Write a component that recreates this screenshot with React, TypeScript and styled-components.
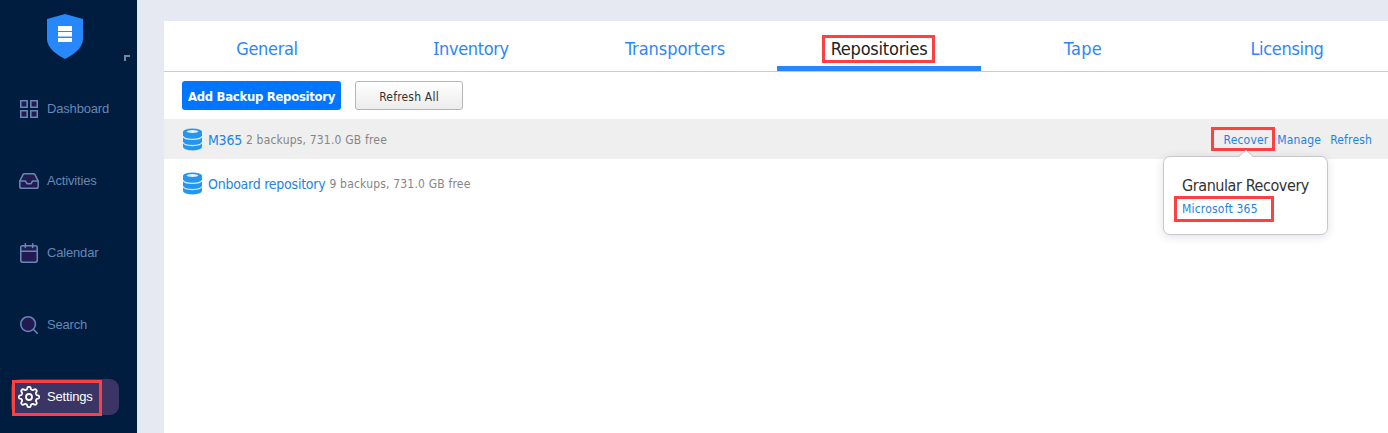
import React from 'react';
import styled, { createGlobalStyle, css } from 'styled-components';

const GlobalStyle = createGlobalStyle`
  *, *::before, *::after { box-sizing: border-box; }
  body { margin: 0; overflow: hidden; }
`;

const uiFont = css`
  font-family: 'DejaVu Sans Condensed', 'DejaVu Sans', 'Noto Sans', sans-serif;
  font-stretch: condensed;
`;

const Page = styled.div`
  display: flex;
  height: 433px;
  background: #e6e9f2;
  overflow: hidden;
  ${uiFont}
`;

const Sidebar = styled.nav`
  width: 137px;
  flex: none;
  background: #001c3f;
  display: flex;
  flex-direction: column;
`;

const Brand = styled.div`
  flex: none;
  height: 91px;
  padding: 14px 0 0 47px;
  position: relative;
`;

const CollapseMark = styled.span`
  position: absolute;
  left: 124px;
  top: 55px;
  width: 6px;
  height: 6px;
  border: solid #7388a3;
  border-width: 2px 0 0 2px;
`;

const NavItem = styled.a<{ $active?: boolean }>`
  position: relative;
  display: flex;
  align-items: center;
  height: 36px;
  width: 108px;
  margin: 0 0 36px 11px;
  padding-left: 6px;
  border-radius: 9px;
  flex: none;
  font: 13px 'Liberation Sans', Arial, sans-serif;
  letter-spacing: -0.17px;
  color: ${p => (p.$active ? '#fff' : '#6589b4')};
  background: ${p => (p.$active ? '#3b3465' : 'transparent')};
`;

const NavIcon = styled.svg<{ $active?: boolean }>`
  width: 24px;
  height: 24px;
  margin-right: 6px;
  overflow: visible;
  fill: ${p => (p.$active ? 'none' : '#241a52')};
  stroke: ${p => (p.$active ? '#fff' : '#6589b4')};
  stroke-width: ${p => (p.$active ? 1.8 : 1.7)};
  stroke-linecap: round;
  stroke-linejoin: round;
`;

const NavLabel = styled.span`
  margin-top: -1px;
`;

const Highlight = styled.span<{ $inset: string }>`
  position: absolute;
  inset: ${p => p.$inset};
  border: 3px solid #fc4141;
  pointer-events: none;
`;

const Panel = styled.main`
  flex: 1;
  margin: 21px 0 0 27px;
  background: #fff;
`;

const Tabs = styled.div`
  display: grid;
  grid-template-columns: repeat(6, 204px);
  height: 51px;
  padding-left: 1px;
  border-bottom: 1px solid #ccc;
`;

const Tab = styled.a<{ $active?: boolean; $spacing?: number }>`
  display: flex;
  justify-content: center;
  height: 50px;
  padding-top: 5px;
  line-height: 45px;
  font-size: 18px;
  letter-spacing: ${p => p.$spacing ?? 0}px;
  color: ${p => (p.$active ? '#222' : '#2b87f7')};
  border-bottom: 5px solid ${p => (p.$active ? '#2688fb' : 'transparent')};
`;

const TabLabel = styled.span`
  position: relative;
  height: 45px;
`;

const SerifCap = styled.span`
  font-family: 'Noto Sans', sans-serif;
`;

const Toolbar = styled.div`
  display: flex;
  gap: 14px;
  padding: 9px 18px;
  height: 47px;
`;

const Button = styled.button<{ $primary?: boolean }>`
  ${uiFont}
  height: 29px;
  width: ${p => (p.$primary ? 159 : 108)}px;
  padding: ${p => (p.$primary ? 1 : 2)}px 0 0;
  border-radius: 3px;
  white-space: nowrap;
  font-size: ${p => (p.$primary ? 13 : 12)}px;
  font-weight: ${p => (p.$primary ? 700 : 400)};
  letter-spacing: ${p => (p.$primary ? -0.3 : 0.2)}px;
  color: ${p => (p.$primary ? '#fff' : '#333')};
  border: ${p => (p.$primary ? '0' : '1px solid #b5b5b5')};
  background: ${p => (p.$primary ? '#0075ff' : 'linear-gradient(#fff, #ececec)')};
`;

const Row = styled.div<{ $hover?: boolean }>`
  display: flex;
  align-items: center;
  height: 40px;
  margin-bottom: 4px;
  padding: 0 17px 0 18px;
  background: ${p => (p.$hover ? '#efefef' : 'transparent')};
`;

const DiskIcon = styled.svg`
  width: 21px;
  height: 23px;
  margin-right: 5px;
`;

const RepoName = styled.a`
  padding-top: 1px;
  font-size: 14px;
  letter-spacing: -0.25px;
  color: #2283e2;
  white-space: nowrap;
`;

const RepoInfo = styled.span`
  padding-top: 1px;
  margin-left: 4px;
  font-size: 12px;
  letter-spacing: 0.19px;
  color: #858585;
  white-space: nowrap;
`;

const Actions = styled.div`
  display: flex;
  gap: 9px;
  margin-left: auto;
  padding-top: 1px;
  font-size: 12px;
  letter-spacing: 0.16px;
  color: #1e82e2;
`;

const Action = styled.a`
  position: relative;
`;

const Popover = styled.div`
  position: absolute;
  z-index: 2;
  left: 1163px;
  top: 156px;
  width: 165px;
  height: 79px;
  padding: 18px 0 0 18px;
  background: #fff;
  border: 1px solid #c8c8cc;
  border-radius: 7px;
  box-shadow: 0 2px 10px rgba(40, 40, 80, 0.14);
`;

const Arrow = styled.svg`
  position: absolute;
  left: 73px;
  top: -8px;
  width: 18px;
  height: 9px;
`;

const PopTitle = styled.div`
  font-size: 16px;
  line-height: 21px;
  letter-spacing: -0.42px;
  color: #333;
  white-space: nowrap;
`;

const PopLink = styled.a`
  position: relative;
  display: inline-block;
  margin-top: 4px;
  font-size: 12px;
  line-height: 18px;
  letter-spacing: 0.2px;
  color: #1e82e2;
  white-space: nowrap;
`;

const Disk = () => (
  <DiskIcon viewBox="0 0 21 23">
    <path d="M1 3.800v14.800C1 23.800 20 23.800 20 18.600V3.800z" fill="#2496f2" />
    <ellipse cx="10.500" cy="3.800" rx="9.500" ry="3.400" fill="#2496f2" />
    <ellipse cx="10.500" cy="3.500" rx="5.800" ry="1.400" fill="#e4f3ff" />
    <path d="M1 8.200c1.500 4.200 17.500 4.200 19 0M1 14.400c1.500 4.200 17.500 4.200 19 0" fill="none" stroke="#d8edff" strokeWidth="1.300" />
  </DiskIcon>
);

const small = '-1.1 -1.1 26.2 26.2';

// Outline of a gear with eight rounded teeth, the first pointing up.
const gearPoints = Array.from({ length: 160 }, (_, i) => {
  const a = (i / 160) * Math.PI * 2;
  const r = 8.9 + 1.3 * Math.tanh(1.8 * Math.cos(8 * a));
  return `${(12 + r * Math.sin(a)).toFixed(2)} ${(12 - r * Math.cos(a)).toFixed(2)}`;
});
const gearPath = `M${gearPoints.join('L')}z`;

export default function App() {
  return (
    <Page>
      <GlobalStyle />
      <Sidebar>
        <Brand>
          <svg width="36" height="46" viewBox="0 0 36 46">
            <path d="M18 0 36 5v20c0 9-10 16-18 20C10 41 0 34 0 25V5z" fill="#2688fb" />
            <path d="M11 12h14v5H11zM11 18h14v4H11zM11 24h14v4H11z" fill="#fff" />
            <path d="M11 22h14v1H11z" fill="#9bc9ff" />
          </svg>
          <CollapseMark />
        </Brand>
        <NavItem>
          <NavIcon viewBox={small}>
            <path d="M3 3h7v7H3zM14 3h7v7h-7zM14 14h7v7h-7zM3 14h7v7H3z" strokeLinejoin="miter" />
          </NavIcon>
          <NavLabel>Dashboard</NavLabel>
        </NavItem>
        <NavItem>
          <NavIcon viewBox={small}>
            <path d="M5.450 5.110 2 12v6a2 2 0 0 0 2 2h16a2 2 0 0 0 2-2v-6l-3.450-6.890A2 2 0 0 0 16.760 4H7.240a2 2 0 0 0-1.790 1.110z" />
            <path d="M22 12h-6l-2 3h-4l-2-3H2" fill="none" />
          </NavIcon>
          <NavLabel>Activities</NavLabel>
        </NavItem>
        <NavItem>
          <NavIcon viewBox={small}>
            <rect x="3" y="4" width="18" height="18" rx="2" />
            <path d="M16 2v4M8 2v4M3 10h18" />
          </NavIcon>
          <NavLabel>Calendar</NavLabel>
        </NavItem>
        <NavItem>
          <NavIcon viewBox={small}>
            <circle cx="11" cy="11" r="8" />
            <path d="m21 21-4.350-4.350" />
          </NavIcon>
          <NavLabel>Search</NavLabel>
        </NavItem>
        <NavItem $active>
          <NavIcon $active viewBox="0 0 24 24">
            <circle cx="12" cy="12" r="3" />
            <path d={gearPath} />
          </NavIcon>
          <NavLabel>Settings</NavLabel>
          <Highlight $inset="1px 17px -1px 1px" />
        </NavItem>
      </Sidebar>
      <Panel>
        <Tabs>
          <Tab $spacing={-0.35}><TabLabel>General</TabLabel></Tab>
          <Tab $spacing={-0.35}><TabLabel><SerifCap>I</SerifCap>nventory</TabLabel></Tab>
          <Tab $spacing={-0.05}><TabLabel>Transporters</TabLabel></Tab>
          <Tab $active $spacing={-0.22}>
            <TabLabel>
              Repositories
              <Highlight $inset="9px -8px 8px -9px" />
            </TabLabel>
          </Tab>
          <Tab $spacing={0.3}><TabLabel>Tape</TabLabel></Tab>
          <Tab $spacing={-0.33}><TabLabel>Licensing</TabLabel></Tab>
        </Tabs>
        <Toolbar>
          <Button $primary>Add Backup Repository</Button>
          <Button>Refresh All</Button>
        </Toolbar>
        <Row $hover>
          <Disk />
          <RepoName>M365</RepoName>
          <RepoInfo>2 backups, 731.0 GB free</RepoInfo>
          <Actions>
            <Action>
              Recover
              <Highlight $inset="-6px -7px -4px -13px" />
            </Action>
            <Action>Manage</Action>
            <Action>Refresh</Action>
          </Actions>
        </Row>
        <Row>
          <Disk />
          <RepoName>Onboard repository</RepoName>
          <RepoInfo>9 backups, 731.0 GB free</RepoInfo>
        </Row>
      </Panel>
      <Popover>
        <Arrow viewBox="0 0 18 9">
          <path d="M1 9 9 1.500 17 9z" fill="#fff" />
          <path d="M1 8 9 1.200 17 8" fill="none" stroke="#c8c8cc" />
        </Arrow>
        <PopTitle>Granular Recovery</PopTitle>
        <PopLink>
          Microsoft 365
          <Highlight $inset="-4px -16px -4px -8px" />
        </PopLink>
      </Popover>
    </Page>
  );
}
